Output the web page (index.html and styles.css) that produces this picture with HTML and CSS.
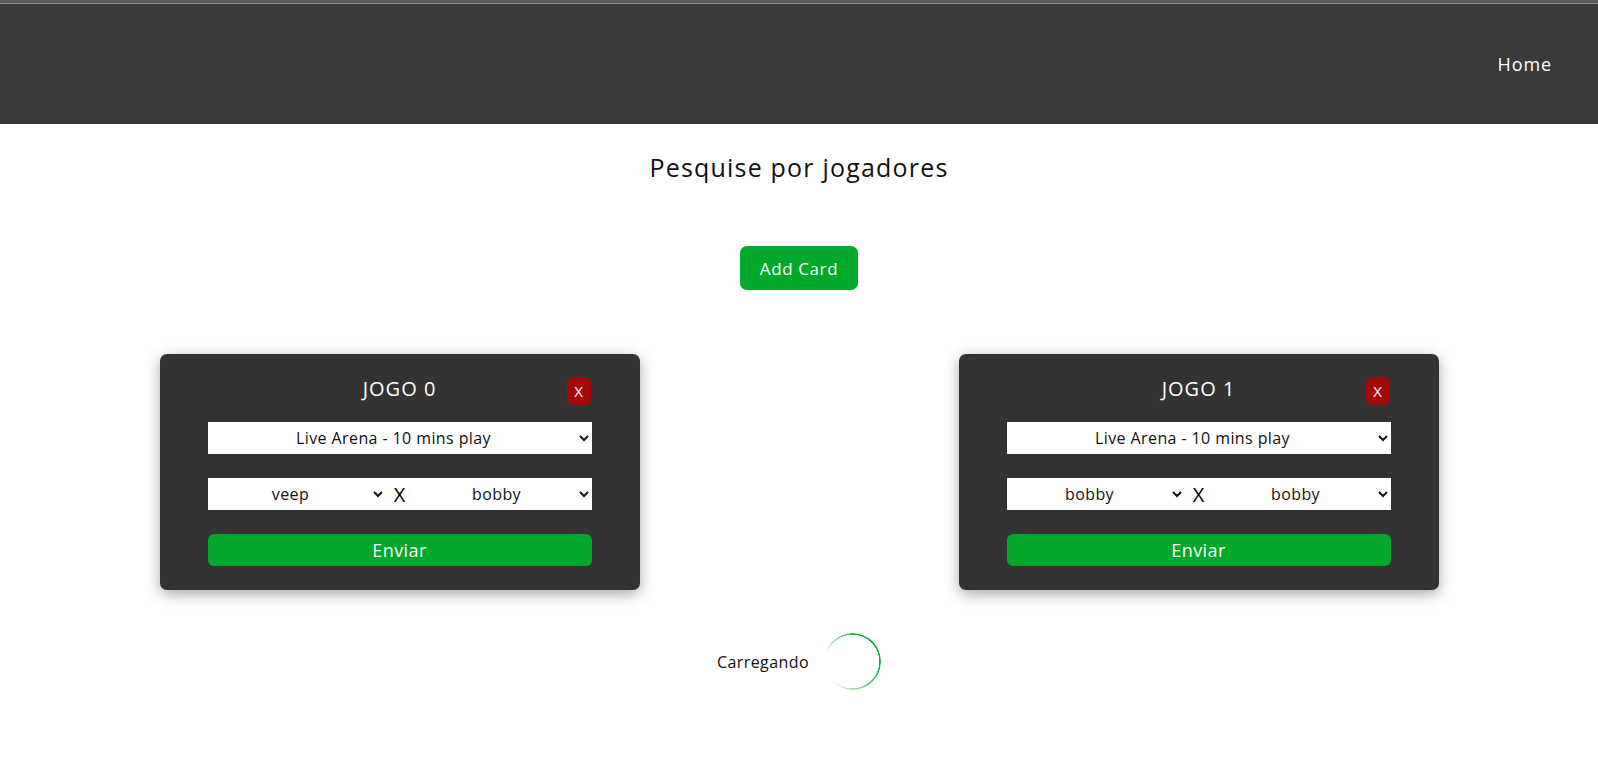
FILE: index.html
```html
<!DOCTYPE html>
<html lang="pt">
<head>
<meta charset="utf-8">
<title>Pesquise por jogadores</title>
<link rel="stylesheet" href="styles.css">
</head>
<body>
<header class="topbar">
  <nav class="nav"><a class="nav-link" href="#">Home</a></nav>
</header>
<main class="main">
  <h1 class="title">Pesquise por jogadores</h1>
  <button class="add-btn" type="button">Add Card</button>
  <section class="cards">
    <div class="card">
      <div class="card-head">
        <span></span>
        <h2 class="card-title">JOGO 0</h2>
        <button class="close-btn" type="button">X</button>
      </div>
      <select class="sel sel-full"><option>Live Arena - 10 mins play</option></select>
      <div class="versus">
        <select class="sel sel-half"><option>veep</option></select>
        <span class="vs">X</span>
        <select class="sel sel-half"><option>bobby</option></select>
      </div>
      <button class="send-btn" type="button">Enviar</button>
    </div>
    <div class="card">
      <div class="card-head">
        <span></span>
        <h2 class="card-title">JOGO 1</h2>
        <button class="close-btn" type="button">X</button>
      </div>
      <select class="sel sel-full"><option>Live Arena - 10 mins play</option></select>
      <div class="versus">
        <select class="sel sel-half"><option>bobby</option></select>
        <span class="vs">X</span>
        <select class="sel sel-half"><option>bobby</option></select>
      </div>
      <button class="send-btn" type="button">Enviar</button>
    </div>
  </section>
  <div class="loading">
    <span class="loading-text">Carregando</span>
    <span class="spinner"></span>
  </div>
</main>
</body>
</html>
```

FILE: styles.css
```css
* { box-sizing: border-box; }
html, body { margin: 0; padding: 0; background: #fff; }
body {
  font-family: "Open Sans", "Noto Sans", "Liberation Sans", sans-serif;
  color: #111;
}
.topbar {
  height: 124px;
  background: #3a3a3a;
  border-top: 3px solid #5a5a5e;
  box-shadow: inset 0 1px 0 #8c8c90;
  display: flex;
  align-items: center;
  justify-content: flex-end;
  padding: 0 46px 0 0;
}
.nav { display: flex; }
.nav-link {
  color: #fff;
  text-decoration: none;
  font-size: 18px;
  line-height: 24px;
  letter-spacing: 0.9px;
}
.main {
  display: flex;
  flex-direction: column;
  align-items: center;
}
.title {
  margin: 25px 0 0;
  font-size: 25px;
  line-height: 36px;
  font-weight: 400;
  letter-spacing: 1.2px;
  color: #111;
}
.add-btn {
  margin-top: 61px;
  height: 44px;
  width: 118px;
  border: none;
  border-radius: 7px;
  background: #02a829;
  color: #fff;
  font-family: inherit;
  font-size: 17px;
  letter-spacing: 0.6px;
  cursor: pointer;
}
.cards {
  margin-top: 64px;
  width: 100%;
  display: flex;
  justify-content: space-around;
}
.card {
  width: 480px;
  background: #333333;
  border-radius: 7px;
  box-shadow: 0 4px 14px rgba(0, 0, 0, 0.35);
  padding: 23px 48px 24px;
  display: flex;
  flex-direction: column;
}
.card-head {
  display: grid;
  grid-template-columns: 1fr auto 1fr;
  align-items: start;
}
.card-title {
  margin: 0;
  color: #fff;
  font-weight: 400;
  font-size: 20px;
  line-height: 20px;
  letter-spacing: 1px;
  padding-top: 2px;
}
.close-btn {
  justify-self: end;
  width: 24px;
  height: 28px;
  margin-right: 1px;
  padding: 0;
  border: none;
  border-radius: 6px;
  background: #a50808;
  color: #fff;
  font-family: inherit;
  font-size: 15px;
  cursor: pointer;
}
.sel {
  height: 32px;
  border: none;
  border-radius: 0;
  background: #fff;
  color: #111;
  font-family: inherit;
  font-size: 16px;
  letter-spacing: 0.4px;
  text-align: center;
  text-align-last: center;
  outline: none;
}
.sel-full {
  margin-top: 17px;
  width: 100%;
}
.versus {
  margin-top: 24px;
  display: flex;
  align-items: center;
  background: #fff;
  height: 32px;
}
.sel-half {
  width: 178px;
  flex: none;
}
.vs {
  width: 28px;
  text-align: center;
  font-size: 20px;
  font-weight: 400;
  color: #000;
}
.send-btn {
  margin-top: 24px;
  height: 32px;
  width: 100%;
  border: none;
  border-radius: 6px;
  background: #02a829;
  color: #fff;
  font-family: inherit;
  font-size: 18px;
  letter-spacing: 0.4px;
  cursor: pointer;
}
.loading {
  margin-top: 43px;
  display: flex;
  align-items: center;
  gap: 15px;
}
.loading-text {
  font-size: 16px;
  letter-spacing: 0.4px;
  color: #111;
}
.spinner {
  width: 57px;
  height: 57px;
  border-radius: 50%;
  background: conic-gradient(from -75deg, rgba(27, 170, 58, 0) 0deg, #1aa83a 85deg, #1aa83a 180deg, rgba(27, 170, 58, 0) 300deg, rgba(27, 170, 58, 0) 360deg);
  -webkit-mask: radial-gradient(farthest-side, transparent calc(100% - 2px), #000 calc(100% - 1.5px));
  mask: radial-gradient(farthest-side, transparent calc(100% - 2px), #000 calc(100% - 1.5px));
}
```
